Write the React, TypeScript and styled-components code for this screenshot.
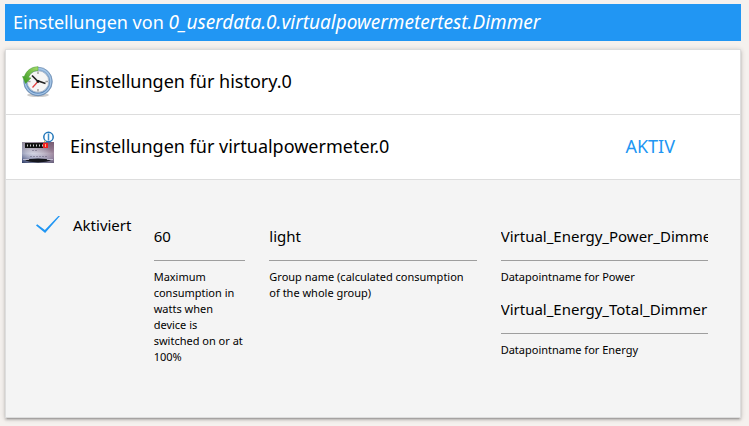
import React, { useState } from "react";
import styled, { createGlobalStyle } from "styled-components";

const GlobalStyle = createGlobalStyle`
  * { box-sizing: border-box; }
  body {
    margin: 0;
    background: #f5f1ee;
    color: #000;
    font-family: "Noto Sans", "Open Sans", sans-serif;
  }
`;

const Page = styled.main`
  padding: 4px 8px 8px 5px;
`;

const TitleBar = styled.h1`
  margin: 0 0 8px;
  padding: 0 8px;
  background: #2196f3;
  color: #fff;
  font-size: 18px;
  font-weight: 400;
  line-height: 37px;
  white-space: nowrap;
  overflow: hidden;
`;

const ObjectId = styled.em`
  font-size: 19px;
`;

const Card = styled.ul`
  list-style: none;
  margin: 0;
  padding: 0;
  background: #fff;
  border: 1px solid #ddd;
  box-shadow: 0 2px 2px rgba(0, 0, 0, 0.14), 0 3px 1px -2px rgba(0, 0, 0, 0.12),
    0 1px 5px rgba(0, 0, 0, 0.2);
`;

const SectionHeader = styled.button`
  display: flex;
  align-items: center;
  width: 100%;
  height: 65px;
  padding: 0 65px 0 16px;
  border: 0;
  border-bottom: 1px solid #ddd;
  background: #fff;
  color: #000;
  font: inherit;
  font-size: 18px;
  line-height: 24px;
  text-align: left;
  cursor: pointer;
`;

const HeaderText = styled.span`
  flex: 1;
  margin-left: 16px;
  padding-bottom: 2px;
`;

const Status = styled.span`
  padding-bottom: 2px;
  color: #2196f3;
`;

const Body = styled.div`
  display: grid;
  grid-template-columns: 2fr 2fr 4fr 4fr;
  min-height: 237px;
  padding: 32px 20px;
  background: #f4f4f4;
`;

const Column = styled.div`
  min-width: 0;
  padding: 0 12px;
`;

const CheckLabel = styled.label`
  display: flex;
  align-items: center;
  gap: 13px;
  height: 26px;
  margin-left: -2px;
  font-size: 15px;
  cursor: pointer;
`;

const CheckBox = styled.input`
  flex: none;
  appearance: none;
  width: 24px;
  height: 20px;
  margin: 0;
  border: 1px solid #999;
  &:checked {
    border: 0;
    background: #2196f3;
    clip-path: polygon(0 52%, 5% 46%, 37% 75%, 93% 5%, 100% 5%, 38% 90%);
  }
`;

const Input = styled.input`
  display: block;
  width: 100%;
  height: 49px;
  padding: 0;
  border: 0;
  border-bottom: 1px solid #9e9e9e;
  border-radius: 0;
  outline: 0;
  background: transparent;
  color: #000;
  font: inherit;
  font-size: 15px;
`;

const FieldLabel = styled.label`
  display: block;
  padding-top: 8px;
  font-size: 11px;
  line-height: 16px;
`;

function HistoryIcon() {
  return (
    <svg width="32" height="32" viewBox="0 0 32 32" aria-hidden="true">
      <defs>
        <linearGradient id="ring" x1="0" y1="0" x2="0" y2="1">
          <stop offset="0" stopColor="#8eb2d8" />
          <stop offset="1" stopColor="#5b86b8" />
        </linearGradient>
        <linearGradient id="leaf" x1="1" y1="0" x2="0" y2="1">
          <stop offset="0" stopColor="#a8dc6c" />
          <stop offset="1" stopColor="#2f941c" />
        </linearGradient>
      </defs>
      <ellipse cx="16" cy="29" rx="11" ry="2" fill="#999" opacity=".5" />
      <circle cx="16" cy="15.5" r="14.3" fill="url(#ring)" stroke="#6f8bad" strokeWidth=".7" />
      <circle cx="16" cy="15.5" r="12.8" fill="none" stroke="#a9c8e8" strokeWidth="1.2" />
      <circle cx="16" cy="15.5" r="10.8" fill="#f5f5f5" stroke="#9fb1c6" strokeWidth=".8" />
      <path d="M16 5.500v2.500M16 23v2.500M6 15.500h2.500M23.500 15.500h2.500" stroke="#9a9a9a" strokeWidth="1.400" />
      <path d="M16 .7C9 .8 4 5 2.500 10.500L.5 10.500 3.500 17.500 9 12 6.500 11.500C8 7.500 11 4.700 16 4.500Z" fill="url(#leaf)" stroke="#4aa12e" strokeWidth=".5" />
      <path d="M15.500 16L10.500 21.500" stroke="#e03c3c" strokeWidth="1.200" />
      <path d="M10 9.500L16 15.500M15 14.500L23.500 17.500" stroke="#222" strokeWidth="1.700" />
      <circle cx="16" cy="15.500" r="1.400" fill="#161616" />
    </svg>
  );
}

function MeterIcon() {
  return (
    <svg width="32" height="32" viewBox="0 0 32 32" aria-hidden="true">
      <defs>
        <linearGradient id="panel" x1="0" y1="0" x2="0" y2="1">
          <stop offset="0" stopColor="#75697d" />
          <stop offset=".3" stopColor="#9992a8" />
          <stop offset=".55" stopColor="#c4c5d9" />
          <stop offset=".75" stopColor="#9a9cbc" />
          <stop offset="1" stopColor="#3c4468" />
        </linearGradient>
        <linearGradient id="glow" x1="0" y1="1" x2="1" y2=".6">
          <stop offset="0" stopColor="#1e3264" stopOpacity=".6" />
          <stop offset=".45" stopColor="#fff" stopOpacity=".25" />
          <stop offset="1" stopColor="#7d5068" stopOpacity=".5" />
        </linearGradient>
      </defs>
      <path d="M0 11h32v21H0z" fill="url(#panel)" />
      <path d="M0 11h32v21H0z" fill="url(#glow)" />
      <path d="M3 12h19v5H3z" fill="#111" />
      <path d="M5 14.500h16" stroke="#ccc" strokeWidth="2" strokeDasharray="1 2" />
      <path d="M21 12h5v5h-5z" fill="#f02020" />
      <path d="M23.500 13v3" stroke="#ffad7a" />
      <path d="M10 19.500h5M8 25.500h17" stroke="#625b76" strokeOpacity=".5" strokeDasharray="2 1" />
      <path d="M3 29.500L8 28l8-.5 8 .5 5 1.500-5 1.200-8 .8-8-.8Z" fill="#15161d" />
      <path d="M1 28.500h6M25 28.500h6" stroke="#ddd8e8" strokeOpacity=".7" />
      <circle cx="26.500" cy="6" r="4.700" fill="#fff" stroke="#2377b9" strokeWidth="1.500" />
      <path d="M26.500 2.500v7" stroke="#3b8dca" strokeWidth="1.500" />
      <path d="M22 11l1.500-1.500" stroke="#e5c03e" />
    </svg>
  );
}

type FieldProps = { id: string; label: string; initial: string };

function Field({ id, label, initial }: FieldProps) {
  const [value, setValue] = useState(initial);
  return (
    <div>
      <Input id={id} value={value} onChange={(e) => setValue(e.target.value)} />
      <FieldLabel htmlFor={id}>{label}</FieldLabel>
    </div>
  );
}

export default function App() {
  const [open, setOpen] = useState(true);
  return (
    <>
      <GlobalStyle />
      <Page>
        <TitleBar>
          Einstellungen von <ObjectId>0_userdata.0.virtualpowermetertest.Dimmer</ObjectId>
        </TitleBar>
        <Card>
          <li>
            <SectionHeader type="button">
              <HistoryIcon />
              <HeaderText>Einstellungen für history.0</HeaderText>
            </SectionHeader>
          </li>
          <li>
            <SectionHeader type="button" aria-expanded={open} onClick={() => setOpen(!open)}>
              <MeterIcon />
              <HeaderText>Einstellungen für virtualpowermeter.0</HeaderText>
              <Status>AKTIV</Status>
            </SectionHeader>
            {open && (
              <Body>
                <Column>
                  <CheckLabel>
                    <CheckBox type="checkbox" defaultChecked />
                    Aktiviert
                  </CheckLabel>
                </Column>
                <Column>
                  <Field
                    id="max-watts"
                    initial="60"
                    label="Maximum consumption in watts when device is switched on or at 100%"
                  />
                </Column>
                <Column>
                  <Field
                    id="group"
                    initial="light"
                    label="Group name (calculated consumption of the whole group)"
                  />
                </Column>
                <Column>
                  <Field id="power" initial="Virtual_Energy_Power_Dimmer" label="Datapointname for Power" />
                  <Field id="energy" initial="Virtual_Energy_Total_Dimmer" label="Datapointname for Energy" />
                </Column>
              </Body>
            )}
          </li>
        </Card>
      </Page>
    </>
  );
}
